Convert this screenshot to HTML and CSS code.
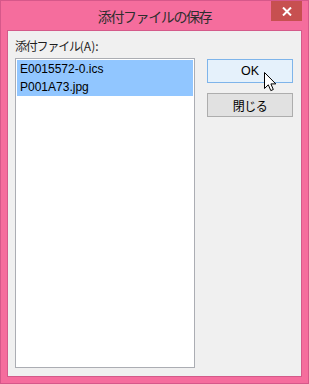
FILE: index.html
```html
<!DOCTYPE html>
<html lang="ja">
<head>
  <meta charset="UTF-8" />
  <title>添付ファイルの保存</title>
  <link rel="stylesheet" href="styles.css">
</head>
<body>
  <div class="window">
    <!-- Title bar -->
    <div class="titlebar">
      <span class="title">添付ファイルの保存</span>
      <div class="close-btn">
        <svg width="10" height="9" viewBox="0 0 10 9">
          <path d="M1 0.5 L9 8.5 M9 0.5 L1 8.5" stroke="#fff" stroke-width="2"/>
        </svg>
      </div>
    </div>

    <!-- Client area -->
    <div class="client">
      <div class="label"><span class="kana">添付ファイル</span>(A):</div>
      <div class="content">
        <ul class="file-list">
          <li class="selected">E0015572-0.ics</li>
          <li class="selected">P001A73.jpg</li>
        </ul>
        <div class="buttons">
          <button class="btn btn-default">OK</button>
          <button class="btn btn-jp">閉じる</button>
        </div>
      </div>
    </div>

    <!-- Mouse pointer -->
    <svg class="cursor" width="13" height="20" viewBox="0 0 13 20">
      <path d="M0.5 0.5 L0.5 16.5 L4.3 12.8 L6.8 18.6 L9.3 17.5 L6.9 11.9 L11.8 11.9 Z" fill="#fff" stroke="#000" stroke-width="1" stroke-linejoin="miter"/>
    </svg>
  </div>
</body>
</html>
```

FILE: styles.css
```css
body {
  margin: 0;
  font-family: "Liberation Sans", "Noto Sans CJK JP", sans-serif;
  font-size: 12px;
  color: #000;
}

.window {
  position: relative;
  width: 309px;
  height: 384px;
  box-sizing: border-box;
  background: #f56d9d;
  border: 1px solid #d6588a;
  padding: 0 6px 6px;
  display: flex;
  flex-direction: column;
}

.titlebar {
  height: 29px;
  display: flex;
  align-items: center;
  justify-content: center;
}

.title {
  font-family: "Noto Sans CJK JP", sans-serif;
  font-size: 14px;
  letter-spacing: -1.4px;
  color: #2e2e2e;
  margin-top: 1px;
}

.close-btn {
  position: absolute;
  top: 0;
  right: 6px;
  width: 31px;
  height: 20px;
  background: #c75050;
  display: flex;
  align-items: center;
  justify-content: center;
}

.client {
  flex: 1;
  background: #f0f0f0;
  border: 1px solid #d45a8a;
  padding: 7px 7px 8px;
  display: flex;
  flex-direction: column;
}

.label {
  font-family: "Noto Sans CJK JP", sans-serif;
  font-size: 12px;
  line-height: 15px;
  color: #1e1e1e;
  margin-bottom: 5px;
}

.label .kana {
  letter-spacing: -1.2px;
}

.content {
  flex: 1;
  display: flex;
  gap: 12px;
}

.file-list {
  list-style: none;
  margin: 0;
  padding: 1px;
  width: 180px;
  box-sizing: border-box;
  background: #fff;
  border: 1px solid #abadb3;
}

.file-list li {
  height: 18px;
  line-height: 18px;
  padding-left: 3px;
}

.file-list li.selected {
  background: #91c6ff;
}

.buttons {
  width: 86px;
  margin-top: 1px;
  display: flex;
  flex-direction: column;
  gap: 10px;
}

.btn {
  height: 24px;
  box-sizing: border-box;
  margin: 0;
  padding: 0;
  background: #e1e1e1;
  border: 1px solid #adadad;
  font-family: "Liberation Sans", "Noto Sans CJK JP", sans-serif;
  font-size: 12.5px;
  color: #000;
}

.btn-jp {
  font-family: "Noto Sans CJK JP", sans-serif;
  font-size: 12px;
  letter-spacing: -0.5px;
}

.btn-default {
  background: #e5f1fb;
  border-color: #7eb4ea;
}

.cursor {
  position: absolute;
  left: 263px;
  top: 71px;
}
```
